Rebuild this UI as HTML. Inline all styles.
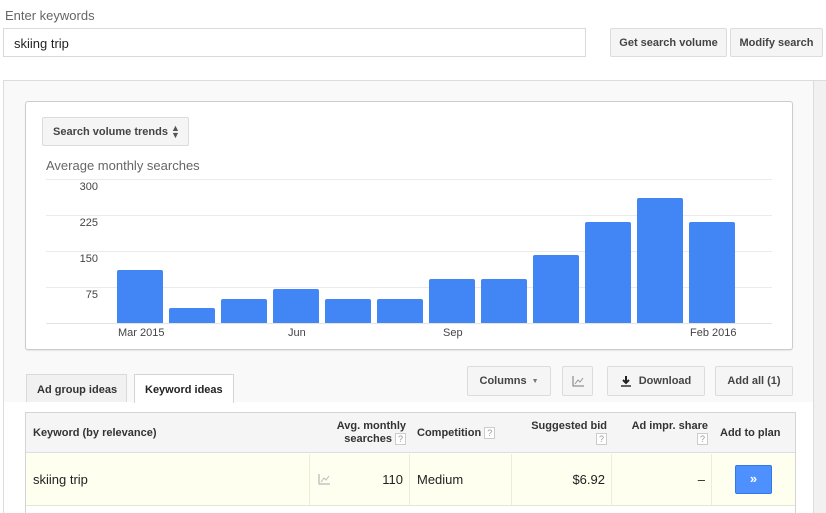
<!DOCTYPE html>
<html><head><style>
*{box-sizing:border-box;margin:0;padding:0}
body{width:826px;height:513px;overflow:hidden;background:#fff;font-family:"Liberation Sans",Arial,sans-serif;color:#222;position:relative}
.a{position:absolute}
.btn{position:absolute;background:#f5f5f5;border:1px solid #dcdcdc;border-radius:2px;font-size:11px;font-weight:bold;color:#444;display:flex;align-items:center;justify-content:center}
.g{position:absolute;left:46px;width:726px;height:1px;background:#ebebeb}
.yl{position:absolute;width:52px;text-align:right;left:46px;font-size:11px;color:#444}
.bar{position:absolute;width:46px;background:#4285f4;bottom:190px;border-radius:2px 2px 0 0}
.xl{position:absolute;top:327px;font-size:11px;color:#444}
.q{display:inline-block;width:11px;height:12px;border:1px solid #ccc;font-size:9px;color:#999;text-align:center;line-height:10px;font-weight:normal;background:#fff;vertical-align:middle}
.th{position:absolute;top:413px;height:40px;font-size:11px;font-weight:bold;color:#333;display:flex;align-items:center}
.th>div{line-height:13px}
.td{position:absolute;top:454px;height:51px;font-size:13px;color:#222;display:flex;align-items:center;border-right:1px solid #ececd8}
</style></head><body>
<div class="a" style="left:5px;top:8px;font-size:13px;color:#666">Enter keywords</div>
<div class="a" style="left:3px;top:28px;width:583px;height:29px;border:1px solid #d9d9d9;font-size:13px;padding:7px 0 0 10px">skiing trip</div>
<div class="btn" style="left:610px;top:28px;width:117px;height:29px">Get search volume</div>
<div class="btn" style="left:730px;top:28px;width:93px;height:29px">Modify search</div>

<div class="a" style="left:3px;top:80px;width:823px;height:433px;background:#f1f1f1;border-top:1px solid #dcdcdc"></div>
<div class="a" style="left:3px;top:80px;width:811px;height:323px;background:#f9f9f9;border-top:1px solid #dcdcdc;border-left:1px solid #dcdcdc;border-right:1px solid #dcdcdc;border-bottom:1px solid #d4d4d4"></div>
<div class="a" style="left:3px;top:402px;width:811px;height:111px;background:#fff;border-left:1px solid #dcdcdc;border-right:1px solid #dcdcdc"></div>

<div class="a" style="left:25px;top:101px;width:768px;height:249px;background:#fff;border:1px solid #ccc;border-radius:3px;box-shadow:0 1px 1px rgba(0,0,0,.08)"></div>
<div class="btn" style="left:42px;top:117px;width:147px;height:29px;justify-content:flex-start;padding-left:10px">Search volume trends&nbsp;<span style="font-size:9px;line-height:7px;display:inline-block;color:#555">▲<br>▼</span></div>
<div class="a" style="left:46px;top:158px;font-size:13px;color:#666">Average monthly searches</div>
<div class="g" style="top:179px"></div><div class="g" style="top:215px"></div><div class="g" style="top:251px"></div><div class="g" style="top:287px"></div><div class="g" style="top:323px;background:#e3e3e3"></div>
<div class="yl" style="top:181px">300</div><div class="yl" style="top:217px">225</div><div class="yl" style="top:253px">150</div><div class="yl" style="top:289px">75</div>
<div class="bar" style="left:117px;height:53px"></div>
<div class="bar" style="left:169px;height:15px"></div>
<div class="bar" style="left:221px;height:24px"></div>
<div class="bar" style="left:273px;height:34px"></div>
<div class="bar" style="left:325px;height:24px"></div>
<div class="bar" style="left:377px;height:24px"></div>
<div class="bar" style="left:429px;height:44px"></div>
<div class="bar" style="left:481px;height:44px"></div>
<div class="bar" style="left:533px;height:68px"></div>
<div class="bar" style="left:585px;height:101px"></div>
<div class="bar" style="left:637px;height:125px"></div>
<div class="bar" style="left:689px;height:101px"></div>
<div class="xl" style="left:118px">Mar 2015</div>
<div class="xl" style="left:288px">Jun</div>
<div class="xl" style="left:443px">Sep</div>
<div class="xl" style="left:690px">Feb 2016</div>

<div class="a" style="left:26px;top:374px;width:101px;height:28px;background:#f1f1f1;border:1px solid #d9d9d9;border-bottom:none;font-size:11px;font-weight:bold;color:#333;padding:9px 0 0 10px">Ad group ideas</div>
<div class="a" style="left:134px;top:374px;width:100px;height:29px;background:#fff;border:1px solid #d4d4d4;border-bottom:none;font-size:11px;font-weight:bold;color:#222;padding:9px 0 0 10px">Keyword ideas</div>
<div class="btn" style="left:467px;top:366px;width:84px;height:30px">Columns <span style="font-size:7px;color:#777;margin-left:5px">▼</span></div>
<div class="btn" style="left:562px;top:366px;width:31px;height:30px"><svg width="12" height="11"><path d="M1 0V10H12" stroke="#777" fill="none"/><path d="M3 8L6 4L8 6L11 2" stroke="#999" fill="none"/></svg></div>
<div class="btn" style="left:607px;top:366px;width:98px;height:30px"><svg width="10" height="11" style="margin-right:8px"><path d="M5 0V7M2 4L5 7L8 4" stroke="#222" stroke-width="2" fill="none"/><path d="M0 10H10" stroke="#222" stroke-width="1.4"/></svg>Download</div>
<div class="btn" style="left:715px;top:366px;width:78px;height:30px">Add all (1)</div>

<div class="a" style="left:25px;top:412px;width:771px;height:101px;border:1px solid #d4d4d4;border-bottom:none"></div>
<div class="a" style="left:26px;top:413px;width:769px;height:40px;background:#f5f5f5;border-bottom:1px solid #ddd"></div>
<div class="a" style="left:26px;top:454px;width:769px;height:52px;background:#fffff0;border-bottom:1px solid #e6e6d4"></div>
<div class="th" style="left:33px">Keyword (by relevance)</div>
<div class="th" style="left:306px;width:100px;justify-content:flex-end;text-align:right"><div>Avg. monthly<br>searches <span class="q">?</span></div></div>
<div class="th" style="left:417px">Competition&nbsp;<span class="q">?</span></div>
<div class="th" style="left:507px;width:100px;justify-content:flex-end;text-align:right"><div>Suggested bid<br><span class="q">?</span></div></div>
<div class="th" style="left:606px;width:102px;justify-content:flex-end;text-align:right"><div>Ad impr. share<br><span class="q">?</span></div></div>
<div class="th" style="left:720px">Add to plan</div>
<div class="td" style="left:26px;width:284px;padding-left:7px">skiing trip</div>
<div class="td" style="left:310px;width:100px;justify-content:space-between;padding:0 6px 0 8px"><svg width="12" height="11"><path d="M1 0V10H12" stroke="#aaa" fill="none"/><path d="M3 8L6 4L8 6L11 2" stroke="#bbb" fill="none"/></svg><span>110</span></div>
<div class="td" style="left:410px;width:102px;padding-left:7px">Medium</div>
<div class="td" style="left:512px;width:100px;justify-content:flex-end;padding-right:6px">$6.92</div>
<div class="td" style="left:612px;width:100px;justify-content:flex-end;padding-right:6px">–</div>
<div class="a" style="left:735px;top:465px;width:37px;height:29px;background:#4d90fe;border:1px solid #3079ed;border-radius:2px;color:#fff;font-weight:bold;font-size:13px;text-align:center;line-height:26px">»</div>
</body></html>
